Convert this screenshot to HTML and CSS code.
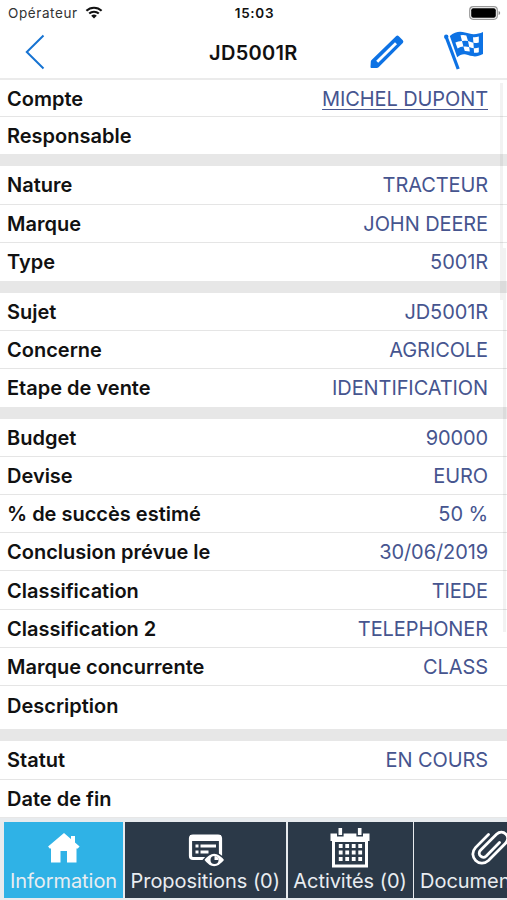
FILE: index.html
```html
<!DOCTYPE html>
<html lang="fr">
<head>
    <meta charset="UTF-8">
    <meta name="viewport" content="width=device-width, initial-scale=1.0">
    <title>JD5001R</title>
    <link rel="stylesheet" href="styles.css">
</head>
<body>
    <div class="status-bar">
        <div class="carrier">
            <span>Opérateur</span>
            <svg class="wifi" viewBox="0 0 18 13">
                <path d="M1.4 4.8a11 11 0 0 1 15.2 0M4.2 7.6a7 7 0 0 1 9.6 0" fill="none" stroke="#111" stroke-width="2.1"/>
                <path d="M9 12.5L6.2 9.8a4 4 0 0 1 5.6 0z" fill="#111"/>
            </svg>
        </div>
        <span class="time">15:03</span>
        <svg class="battery" viewBox="0 0 32 14">
            <rect x=".7" y=".7" width="27.6" height="12.6" rx="3.5" fill="#fff" stroke="#999" stroke-width="1.2"/>
            <rect x="2.2" y="2.2" width="24.6" height="9.6" rx="2" fill="#000"/>
            <path d="M29.6 5v4q1.6-.5 1.6-2t-1.6-2z" fill="#888"/>
        </svg>
    </div>

    <header>
        <svg class="back" viewBox="0 0 20 36">
            <path d="M18.5 1.5L1.8 18l16.7 16.5" fill="none" stroke="#1673d2" stroke-width="2"/>
        </svg>
        <h1>JD5001R</h1>
        <svg class="edit" viewBox="0 0 34 34">
            <path fill="#0d72e4" d="M26 1.2q1.4-1.2 2.8 0l4 4q1.2 1.4 0 2.8L8.6 32.2Q7.8 33 6.600 33H1.400q-.9 0-.9-1l.3-5.2q0-1 .8-1.800z"/>
            <path d="M7.200 26.800L26 8.200" stroke="#fff" stroke-width="2.800"/>
        </svg>
        <svg class="flag" viewBox="0 0 40 40">
            <path d="M2.200 6l12 32" stroke="#0d72e4" stroke-width="3.200" fill="none"/>
            <circle cx="2.200" cy="5.800" r="2.200" fill="#0d72e4"/>
            <path fill="#0d72e4" d="M5.800 5C13-1.600 20 1 25.300 2.600c5 1.500 9.500.2 13.700-1.600v22.100c-7.400 4.200-12.500 1.600-17 .5-3.300-.8-6.100.4-8.800 2.600z"/>
            <g fill="#fff">
                <path d="M16.500 4.200q3-.6 5.800.2l1.700 5.600q-3-.7-6 0z"/>
                <path d="M11.400 11.600q2.500-1.400 6.600-1.600l1.400 5.600q-3 .2-5.800 2z"/>
                <path d="M29 6.200q2.800.4 5.800-.6v5.800q-2.800.8-5.400.4z"/>
                <path d="M24 10q3 1.300 5.400 1.800l.4 5.400q-3-.2-4.600-1.200z"/>
                <path d="M19.400 15.600q2.800-.4 5.800.4l.6 4.600q-2.700-.8-5-.7z"/>
                <path d="M29.800 17.200q2.700.2 5-.6v4.600q-2.600.9-4.800.5z"/>
            </g>
        </svg>
    </header>

    <main>
        <section class="group">
            <div class="row"><span class="label">Compte</span><a class="value" href="#">MICHEL DUPONT</a></div>
            <div class="row"><span class="label">Responsable</span></div>
        </section>
        <section class="group">
            <div class="row"><span class="label">Nature</span><span class="value">TRACTEUR</span></div>
            <div class="row"><span class="label">Marque</span><span class="value">JOHN DEERE</span></div>
            <div class="row"><span class="label">Type</span><span class="value">5001R</span></div>
        </section>
        <section class="group">
            <div class="row"><span class="label">Sujet</span><span class="value">JD5001R</span></div>
            <div class="row"><span class="label">Concerne</span><span class="value">AGRICOLE</span></div>
            <div class="row"><span class="label">Etape de vente</span><span class="value">IDENTIFICATION</span></div>
        </section>
        <section class="group">
            <div class="row"><span class="label">Budget</span><span class="value">90000</span></div>
            <div class="row"><span class="label">Devise</span><span class="value">EURO</span></div>
            <div class="row"><span class="label">% de succès estimé</span><span class="value">50 %</span></div>
            <div class="row"><span class="label">Conclusion prévue le</span><span class="value">30/06/2019</span></div>
            <div class="row"><span class="label">Classification</span><span class="value">TIEDE</span></div>
            <div class="row"><span class="label">Classification 2</span><span class="value">TELEPHONER</span></div>
            <div class="row"><span class="label">Marque concurrente</span><span class="value">CLASS</span></div>
            <div class="row description"><span class="label">Description</span></div>
        </section>
        <section class="group">
            <div class="row"><span class="label">Statut</span><span class="value">EN COURS</span></div>
            <div class="row"><span class="label">Date de fin</span></div>
        </section>
        <div class="scroll-track"></div>
        <div class="scroll-thumb"></div>
    </main>

    <nav>
        <a class="tab active" href="#">
            <svg viewBox="0 0 40 40">
                <path fill="#fff" d="M20 5l15.600 13.400-1.800 2.200H32.500V34.500H23V23h-6.500v11.500H7V20.600H5.700l-1.600-2.200z"/>
                <path fill="#fff" d="M27 8h4v8h-4z"/>
            </svg>
            <span>Information</span>
        </a>
        <a class="tab" href="#">
            <svg viewBox="0 0 40 40">
                <rect x="5.500" y="8" width="30" height="22.500" rx="2.500" fill="none" stroke="#fff" stroke-width="3.200"/>
                <path d="M5 10h31" stroke="#fff" stroke-width="6"/>
                <path d="M10.500 18h3M15.500 18h15.500M10.500 24h3M15.500 24h8" stroke="#fff" stroke-width="3"/>
                <path fill="#fff" stroke="#2b3948" stroke-width="1.500" d="M18.500 32q10.500-14 21.500 0-11 14-21.500 0z"/>
                <circle cx="29.500" cy="32" r="4" fill="#2b3948"/>
                <path d="M29.500 28v4h4a4 4 0 0 0-4-4z" fill="#fff"/>
            </svg>
            <span>Propositions (0)</span>
        </a>
        <a class="tab" href="#">
            <svg viewBox="0 0 40 40">
                <path fill="#fff" fill-rule="evenodd" d="M.500 5.500h39v7.500H38v26.500H2V13H.500zM5 14v22.500h30V14z"/>
                <path d="M10.300 1v7.500M29.700 1v7.500" stroke="#2b3948" stroke-width="6.600"/>
                <path d="M10.300 0v7M29.700 0v7" stroke="#fff" stroke-width="3.600"/>
                <path d="M8.800 18h23.300M8.800 24.500h23.300M8.800 31h23.300" stroke="#fff" stroke-width="3.800" stroke-dasharray="3.800 2.700"/>
            </svg>
            <span>Activités (0)</span>
        </a>
        <a class="tab" href="#">
            <svg viewBox="0 0 40 40">
                <path d="M18.500 6.500L5.500 19.600c-8 9 4 20.900 13 12.900L35.500 15.300c6-7-2.500-15-9-9L10.500 22.300c-3.800 4.200 1.800 9.400 5.800 5.600L29.500 14.500" fill="none" stroke="#fff" stroke-width="2.800" stroke-linecap="round"/>
            </svg>
            <span>Documents (0)</span>
        </a>
    </nav>
</body>
</html>
```

FILE: styles.css
```css
* {
    box-sizing: border-box;
}

body {
    font-family: Inter, 'Liberation Sans', sans-serif;
    background-color: #fff;
    color: #111;
    margin: 0;
    height: 900px;
    display: flex;
    flex-direction: column;
    overflow: hidden;
}

svg {
    display: block;
    flex: none;
}

/* status bar */
.status-bar {
    height: 26px;
    display: grid;
    grid-template-columns: 1fr auto 1fr;
    align-items: center;
    padding: 0 6px 0 8px;
    font-size: 13.5px;
}

.carrier {
    display: flex;
    gap: 7px;
    color: #333;
    letter-spacing: 0.6px;
}

.wifi {
    width: 18px;
    height: 13px;
    margin-top: 1px;
}

.time {
    font-weight: 600;
    letter-spacing: 0.7px;
}

.battery {
    width: 32px;
    height: 14px;
    justify-self: end;
}

/* title bar */
header {
    height: 54px;
    display: flex;
    align-items: center;
    padding: 0 23px 0 25px;
    border-bottom: 2px solid #ebebeb;
}

.back {
    width: 20px;
    height: 36px;
}

h1 {
    width: 92px;
    margin: 1px 0 0 164px;
    font-size: 20px;
    font-weight: 600;
    letter-spacing: 0.3px;
    white-space: nowrap;
}

.edit {
    width: 34px;
    height: 34px;
    margin-left: auto;
}

.flag {
    width: 40px;
    height: 40px;
    margin: -2px 0 0 40px;
}

/* record fields */
main {
    position: relative;
    height: 738px;
    background-color: #e7e7e7;
    display: flex;
    flex-direction: column;
    gap: 12px;
}

.group {
    background-color: #fff;
}

.row {
    height: 38.2px;
    display: flex;
    align-items: center;
    justify-content: space-between;
    padding: 1px 19px 0 7px;
    border-bottom: 1px solid #e5e5e5;
    font-size: 20px;
    white-space: nowrap;
}

.row:last-child {
    height: 37.8px;
    border-bottom: none;
}

.group:first-child .row {
    height: 37.2px;
}

.label {
    font-weight: 600;
}

.value {
    color: #46558f;
    letter-spacing: -0.1px;
    text-underline-offset: 3px;
    text-decoration-thickness: 1px;
}

.row.description {
    height: 43.3px;
    padding-bottom: 5px;
}

.scroll-track,
.scroll-thumb {
    position: absolute;
    width: 3px;
    background-color: rgba(0, 0, 0, 0.05);
}

.scroll-track {
    top: 3px;
    right: 4px;
    height: 217px;
}

.scroll-thumb {
    top: 168px;
    right: 1px;
    height: 384px;
}

/* bottom tabs */
nav {
    flex: 1;
    display: flex;
    gap: 1.5px;
    padding: 4px 0 2px 4px;
    background-color: #e7ebee;
    overflow: hidden;
}

.tab {
    flex: none;
    width: 125px;
    display: flex;
    flex-direction: column;
    align-items: center;
    padding-top: 6px;
    background-color: #2b3948;
    color: #e9edf1;
    font-size: 20px;
    line-height: 26px;
    letter-spacing: -0.05px;
    text-decoration: none;
    white-space: nowrap;
}

.tab svg {
    width: 40px;
    height: 40px;
}

.tab.active {
    width: 119px;
    background-color: #2fb2e6;
}

.tab:nth-child(2) {
    width: 161.5px;
}

.tab:nth-child(4) {
    width: 152px;
}
```
